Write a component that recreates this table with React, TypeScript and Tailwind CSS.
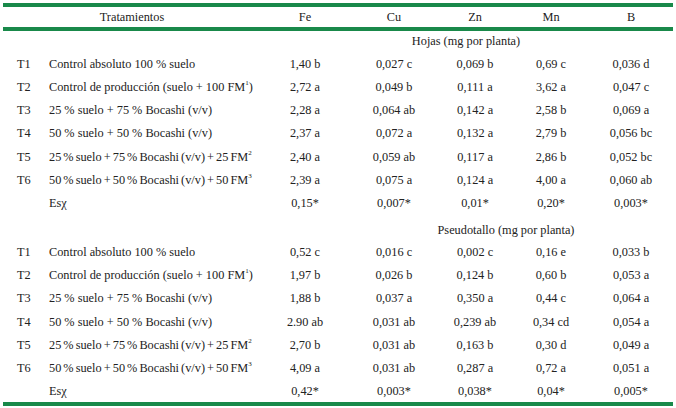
import React from "react";

const G = "grid grid-cols-[39px_228px_70px_108px_54px_98px_62px] items-center";

type Row = { t: string; d: React.ReactNode; v: string[]; tight?: boolean };

const sup = (s: string) => <sup className="text-[7px] relative top-[-1px] align-super leading-none">{s}</sup>;

const hojas: Row[] = [
  { t: "T1", d: "Control absoluto 100 % suelo", v: ["1,40 b", "0,027 c", "0,069 b", "0,69 c", "0,036 d"] },
  { t: "T2", d: <>Control de producción (suelo + 100 FM{sup("1")})</>, v: ["2,72 a", "0,049 b", "0,111 a", "3,62 a", "0,047 c"] },
  { t: "T3", d: "25 % suelo + 75 % Bocashi (v/v)", v: ["2,28 a", "0,064 ab", "0,142 a", "2,58 b", "0,069 a"] },
  { t: "T4", d: "50 % suelo + 50 % Bocashi (v/v)", v: ["2,37 a", "0,072 a", "0,132 a", "2,79 b", "0,056 bc"] },
  { t: "T5", d: <>25 % suelo + 75 % Bocashi (v/v) + 25 FM{sup("2")}</>, v: ["2,40 a", "0,059 ab", "0,117 a", "2,86 b", "0,052 bc"], tight: true },
  { t: "T6", d: <>50 % suelo + 50 % Bocashi (v/v) + 50 FM{sup("3")}</>, v: ["2,39 a", "0,075 a", "0,124 a", "4,00 a", "0,060 ab"], tight: true },
  { t: "", d: "Esχ", v: ["0,15*", "0,007*", "0,01*", "0,20*", "0,003*"] },
];

const pseudo: Row[] = [
  { t: "T1", d: "Control absoluto 100 % suelo", v: ["0,52 c", "0,016 c", "0,002 c", "0,16 e", "0,033 b"] },
  { t: "T2", d: <>Control de producción (suelo + 100 FM{sup("1")})</>, v: ["1,97 b", "0,026 b", "0,124 b", "0,60 b", "0,053 a"] },
  { t: "T3", d: "25 % suelo + 75 % Bocashi (v/v)", v: ["1,88 b", "0,037 a", "0,350 a", "0,44 c", "0,064 a"] },
  { t: "T4", d: "50 % suelo + 50 % Bocashi (v/v)", v: ["2.90 ab", "0,031 ab", "0,239 ab", "0,34 cd", "0,054 a"] },
  { t: "T5", d: <>25 % suelo + 75 % Bocashi (v/v) + 25 FM{sup("2")}</>, v: ["2,70 b", "0,031 ab", "0,163 b", "0,30 d", "0,049 a"], tight: true },
  { t: "T6", d: <>50 % suelo + 50 % Bocashi (v/v) + 50 FM{sup("3")}</>, v: ["4,09 a", "0,031 ab", "0,287 a", "0,72 a", "0,051 a"], tight: true },
  { t: "", d: "Esχ", v: ["0,42*", "0,003*", "0,038*", "0,04*", "0,005*"] },
];

function DataRow({ r, h }: { r: Row; h: string }) {
  return (
    <div className={`${G} ${h}`}>
      <div className="pl-[14px]">{r.t}</div>
      <div className={`pl-[7px] whitespace-nowrap ${r.tight ? "[word-spacing:-1px]" : ""}`}>{r.d}</div>
      {r.v.map((x, i) => (
        <div key={i} className="text-center whitespace-nowrap">{x}</div>
      ))}
    </div>
  );
}

export default function App() {
  return (
    <div className="w-[676px] h-[408px] bg-white px-[3px] pt-[3px] text-[12.3px] leading-none text-[#222] font-['Liberation_Serif','Times_New_Roman','DejaVu_Serif',serif]">
      <div className="h-[4px] bg-[#19894a]" />
      <div className={`${G} h-[20px]`}>
        <div className="col-span-2 text-center pr-[9px]">Tratamientos</div>
        <div className="text-center">Fe</div>
        <div className="text-center">Cu</div>
        <div className="text-center">Zn</div>
        <div className="text-center">Mn</div>
        <div className="text-center">B</div>
      </div>
      <div className="h-[4px] bg-[#19894a]" />
      <div className={`${G} h-[21px]`}>
        <div className="col-span-2" />
        <div className="col-span-5 text-center">Hojas (mg por planta)</div>
      </div>
      {hojas.map((r, i) => (
        <DataRow key={i} r={r} h="h-[23.3px]" />
      ))}
      <div className={`${G} h-[25.3px]`}>
        <div className="col-span-3" />
        <div className="col-span-4 text-center pl-[10px] pt-[4px]">Pseudotallo (mg por planta)</div>
      </div>
      {pseudo.map((r, i) => (
        <DataRow key={i} r={r} h={i === 6 ? "h-[22px]" : "h-[23.3px]"} />
      ))}
      <div className="h-[4px] bg-[#19894a]" />
    </div>
  );
}
